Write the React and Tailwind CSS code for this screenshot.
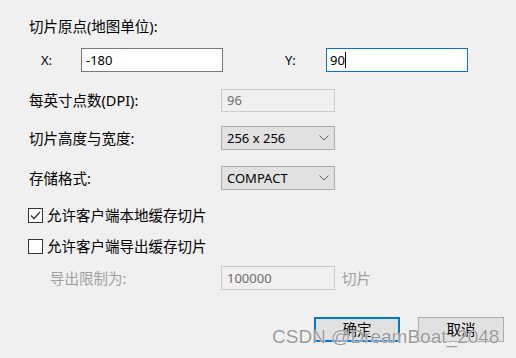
const font = { fontFamily: '"Segoe UI", "Noto Sans", "Noto Sans CJK SC", sans-serif' };

function Chevron() {
  return (
    <svg width="10" height="6" viewBox="0 0 10 6" className="shrink-0">
      <path d="M0.5 0.5 L5 5 L9.5 0.5" fill="none" stroke="#606060" strokeWidth="1" />
    </svg>
  );
}

function Select({ value }) {
  return (
    <div className="flex items-center justify-between w-[114px] h-[24px] bg-[#e1e1e1] border border-[#adadad] pl-[5px] pr-[5px]">
      <span className="text-[13px] text-black leading-none">{value}</span>
      <Chevron />
    </div>
  );
}

function Checkbox({ checked, label }) {
  return (
    <div className="flex items-center h-[16px] pl-[28px]">
      <div className="w-[15px] h-[15px] border border-[#333333] bg-white flex items-center justify-center">
        {checked && (
          <svg width="11" height="9" viewBox="0 0 11 9">
            <path d="M1 4.5 L4 7.5 L10 1" fill="none" stroke="#333" strokeWidth="1.3" />
          </svg>
        )}
      </div>
      <span className="ml-[4px] text-[14.5px] text-black leading-none">{label}</span>
    </div>
  );
}

export default function App() {
  return (
    <div className="relative w-[516px] h-[358px] bg-[#f0f0f0] overflow-hidden text-black" style={font}>
      {/* 切片原点 */}
      <div className="mt-[16px] h-[20px] flex items-center pl-[29px] text-[14.5px] leading-none">
        切片原点(地图单位):
      </div>

      <div className="mt-[12px] h-[24px] flex items-center">
        <span className="pl-[41px] w-[81px] text-[13px] leading-none">X:</span>
        <div className="w-[142px] h-[24px] bg-white border border-[#7a7a7a] flex items-center pl-[4px] text-[13px] leading-none">
          -180
        </div>
        <span className="ml-[62px] w-[41px] text-[13px] leading-none">Y:</span>
        <div className="w-[142px] h-[24px] bg-white border border-[#0078d7] flex items-center pl-[3px] text-[13px] leading-none">
          90<span className="inline-block w-px h-[16px] bg-black" />
        </div>
      </div>

      <div className="mt-[17px] h-[23px] flex items-center">
        <span className="pl-[29px] w-[221px] text-[14.5px] leading-none">每英寸点数(DPI):</span>
        <div className="w-[114px] h-[23px] border border-[#cccccc] flex items-center pl-[5px] text-[13px] text-[#6d6d6d] leading-none">
          96
        </div>
      </div>

      <div className="mt-[14px] h-[24px] flex items-center">
        <span className="pl-[29px] w-[221px] text-[14.5px] leading-none">切片高度与宽度:</span>
        <Select value="256 x 256" />
      </div>

      <div className="mt-[16px] h-[24px] flex items-center">
        <span className="pl-[29px] w-[221px] text-[14.5px] leading-none">存储格式:</span>
        <Select value="COMPACT" />
      </div>

      <div className="mt-[17px]">
        <Checkbox checked label="允许客户端本地缓存切片" />
      </div>
      <div className="mt-[15px]">
        <Checkbox label="允许客户端导出缓存切片" />
      </div>

      <div className="mt-[12px] h-[24px] flex items-center text-[14.5px] leading-none text-[#a0a0a0]">
        <span className="pl-[50px] w-[221px]">导出限制为:</span>
        <div className="w-[114px] h-[24px] border border-[#cccccc] flex items-center pl-[5px] text-[13px] text-[#6d6d6d]">
          100000
        </div>
        <span className="ml-[7px]">切片</span>
      </div>

      <div className="mt-[27px] flex pl-[314px] gap-[18px]">
        <button className="w-[86px] h-[25px] bg-[#e1e1e1] border-2 border-[#0078d7] text-[14.5px] leading-none">确定</button>
        <button className="w-[86px] h-[25px] bg-[#e1e1e1] border border-[#adadad] text-[14.5px] leading-none">取消</button>
      </div>

      {/* watermark */}
      <div
        className="absolute left-[272px] top-[327px] text-[19px] leading-none text-[#999999] whitespace-nowrap"
        style={{ fontFamily: '"Liberation Sans", Arial, sans-serif', textShadow: '0 0 1px #fff, 0 0 1px #fff' }}
      >
        CSDN @DreamBoat_2048
      </div>
    </div>
  );
}
